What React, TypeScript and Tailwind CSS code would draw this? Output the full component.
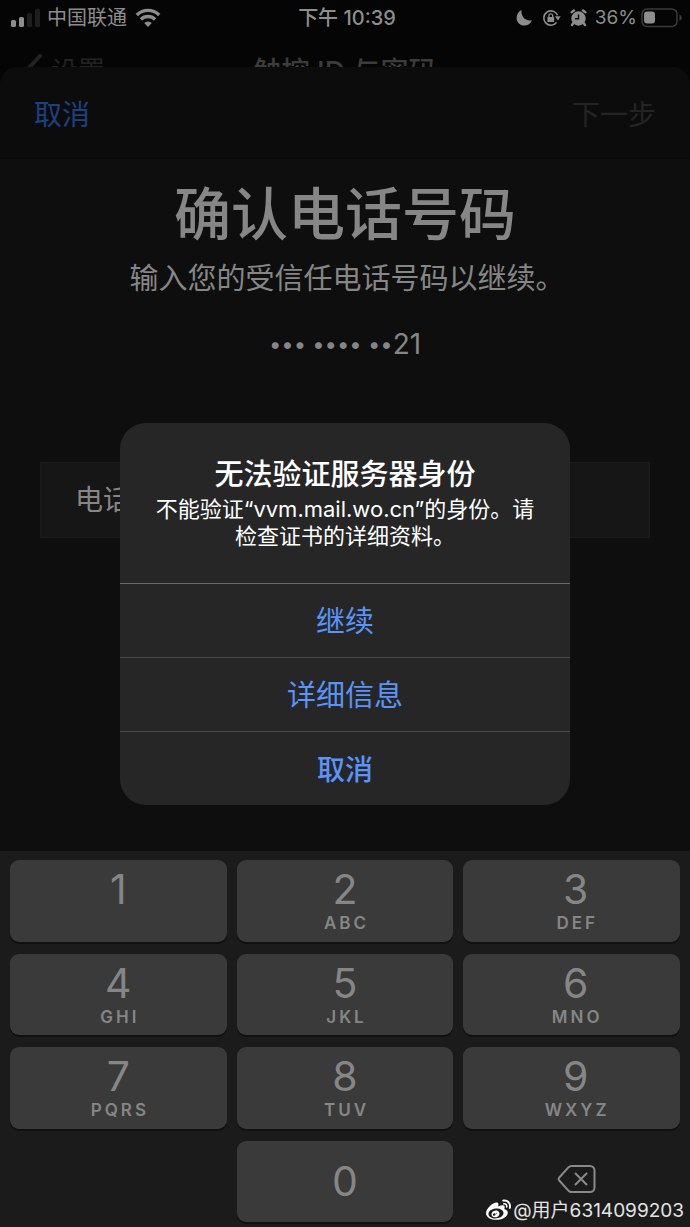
import { useState } from 'react'
import { FaWeibo } from 'react-icons/fa'

interface KeyItem {
  digit: string;
  letters?: string;
}

const keys: KeyItem[] = [
  { digit: '1', letters: '' },
  { digit: '2', letters: 'ABC' },
  { digit: '3', letters: 'DEF' },
  { digit: '4', letters: 'GHI' },
  { digit: '5', letters: 'JKL' },
  { digit: '6', letters: 'MNO' },
  { digit: '7', letters: 'PQRS' },
  { digit: '8', letters: 'TUV' },
  { digit: '9', letters: 'WXYZ' },
]

const SignalIcon = () => (
  <svg width="30" height="20" viewBox="0 0 30 20" aria-hidden="true">
    <rect x="0" y="12" width="5" height="7" rx="1.5" fill="#8d8d8d" />
    <rect x="8" y="9" width="5" height="10" rx="1.5" fill="#8d8d8d" />
    <rect x="16" y="5" width="5" height="14" rx="1.5" fill="#1e1e1e" />
    <rect x="24" y="1" width="5" height="18" rx="1.5" fill="#1e1e1e" />
  </svg>
)

const WifiIcon = () => (
  <svg width="26" height="20" viewBox="0 0 26 20" fill="none" stroke="#8d8d8d" strokeWidth="3.4" aria-hidden="true">
    <path d="M1.8 7a15.8 15.8 0 0 1 22.4 0" />
    <path d="M5.9 11.4a10 10 0 0 1 14.2 0" />
    <path d="M13 19l-3.8-4a5.400 5.400 0 0 1 7.600 0z" fill="#8d8d8d" stroke="none" />
  </svg>
)

const MoonIcon = () => (
  <svg width="17" height="18" viewBox="0 0 17 18" fill="#8d8d8d" aria-hidden="true">
    <path d="M5.6 1C4.6 6.8 8.8 12.6 16 11.3C14.6 14.8 11.8 16.6 8.4 16.6C4 16.6 .6 13.4 .6 9C.6 5.4 2.5 2.3 5.6 1z" />
  </svg>
)

const RotationLockIcon = () => (
  <svg width="19" height="18" viewBox="0 0 19 18" fill="none" stroke="#8d8d8d" strokeWidth="1.6" aria-hidden="true">
    <path d="M15.6 6.200A7.200 7.200 0 1 0 14.600 13.600" />
    <path d="M12.900 7.200h5.800l-2.700 4.400z" fill="#8d8d8d" stroke="none" />
    <rect x="5.400" y="7.900" width="6.800" height="5" rx="0.7" fill="#8d8d8d" stroke="none" />
    <path d="M6.900 8.200V6.700a1.900 1.900 0 0 1 3.800 0v1.500" strokeWidth="1.3" />
  </svg>
)

const AlarmIcon = () => (
  <svg width="17" height="18" viewBox="0 0 17 18" aria-hidden="true">
    <g stroke="#8d8d8d" strokeWidth="2.4" strokeLinecap="round">
      <path d="M1.600 3.200l2.400-1.600M15.400 3.200l-2.400-1.600M3.400 14l-1.400 2M13.600 14l1.400 2" />
    </g>
    <circle cx="8.500" cy="9.500" r="7.200" fill="#8d8d8d" />
    <path d="M8.500 5.500v4.300H5" fill="none" stroke="#050505" strokeWidth="1.4" />
  </svg>
)

const BatteryIcon = () => (
  <svg width="42" height="20" viewBox="0 0 42 20" aria-hidden="true">
    <rect x="1" y="1" width="35" height="17.500" rx="5" fill="none" stroke="#3b3b3b" strokeWidth="1.5" />
    <rect x="3" y="3.500" width="11" height="12" rx="3" fill="#8d8d8d" />
    <path d="M38.500 6.500c3 1.500 3 5 0 6.500z" fill="#3b3b3b" />
  </svg>
)

const DeleteIcon = () => (
  <svg width="40" height="30" viewBox="0 0 40 30" fill="none" stroke="#8a8a8a" strokeWidth="2" strokeLinejoin="round" aria-hidden="true">
    <path d="M14.500 2H33a4.500 4.500 0 0 1 4.500 4.500v17A4.500 4.500 0 0 1 33 28H14.500a4 4 0 0 1-2.900-1.200L2.300 16.500a2 2 0 0 1 0-3L11.600 3.200A4 4 0 0 1 14.500 2z" />
    <path d="M18.500 9.500l11 11M29.500 9.500l-11 11" strokeLinecap="round" />
  </svg>
)

const App = () => {
  const [phone, setPhone] = useState('')
  const [showAlert, setShowAlert] = useState(true)

  return (
    <div className="relative flex min-h-screen flex-col overflow-hidden bg-[#050505] font-['Inter','Noto_Sans_CJK_SC',sans-serif] text-[#868686]">
      <header className="grid h-9 grid-cols-[1fr_auto_1fr] items-center pl-[11px] pr-[7px] text-[20px] leading-5 text-[#8d8d8d]">
        <div className="flex items-center">
          <SignalIcon />
          <span className="ml-[6px] mr-2">中国联通</span>
          <WifiIcon />
        </div>
        <span className="font-medium">下午 10:39</span>
        <div className="flex items-center justify-end">
          <MoonIcon />
          <span className="ml-[9px]"><RotationLockIcon /></span>
          <span className="ml-[9px] mr-2"><AlarmIcon /></span>
          <span className="mr-1 text-[19px]">36%</span>
          <BatteryIcon />
        </div>
      </header>

      {/* settings page bar, the sheet below slides over it */}
      <div className="-mb-5 grid h-[51px] grid-cols-[1fr_auto_1fr] pl-[24px] pr-6 pt-[18px] text-[28px] leading-9">
        <div className="flex text-[27px] text-[#222222]">
          <svg width="19" height="32" viewBox="0 0 19 32" fill="none" stroke="#222222" strokeWidth="4" strokeLinecap="round" aria-hidden="true">
            <path d="M16 2L3 16l13 14" />
          </svg>
          <span className="ml-2">设置</span>
        </div>
        <h2 className="font-medium text-[#3c3c3c]">触控 ID 与密码</h2>
      </div>

      <main className="relative flex flex-1 flex-col rounded-t-[18px] bg-[#0e0e0e]">
        <div className="flex h-[92px] items-center justify-between rounded-t-[18px] border-b border-[#0a0a0a] bg-[#0c0c0c] px-[34px] pt-1 text-[28px]">
          <button className="text-[#1c4180]">取消</button>
          <button className="text-[#242424]">下一步</button>
        </div>

        <div className="flex flex-col items-center pt-[22px] text-center">
          <h1 className="text-[57px] font-medium leading-[68px]">确认电话号码</h1>
          <p className="mt-2 pl-1 text-[29px] leading-[44px]">输入您的受信任电话号码以继续。</p>
          <p className="mt-[25px] flex items-center text-[28px] leading-9">
            <span className="text-[22px]">••• •••• ••</span>
            <span>21</span>
          </p>
        </div>

        <div className="mx-10 mt-[100px] flex h-[76px] items-center border border-[#1c1c1c] bg-[#161616] px-[34px] text-[28px]">
          <label htmlFor="phone">电话</label>
          <input
            id="phone"
            type="tel"
            className="ml-8 min-w-0 flex-1 bg-transparent outline-none"
            value={phone}
            onChange={(e) => setPhone(e.target.value)}
          />
        </div>
      </main>

      <div className="grid h-[376px] grid-cols-3 grid-rows-4 gap-x-[10px] gap-y-3 bg-[#1b1b1b] px-[10px] pb-[5px] pt-[9px]">
        {keys.map((key) => (
          <button
            key={key.digit}
            className="flex flex-col items-center rounded-[9px] bg-[#3a3a3a] pt-[9px] shadow-[0_2px_0_#101010] nth-[3n]:pl-2"
            onClick={() => setPhone(phone + key.digit)}
          >
            <span className="text-[41px] leading-10">{key.digit}</span>
            {key.letters && <span className="mt-1 pl-[3px] text-[17px] font-semibold leading-5 tracking-[3px]">{key.letters}</span>}
          </button>
        ))}
        <button
          className="col-start-2 rounded-[9px] bg-[#3a3a3a] text-[41px] leading-10 shadow-[0_2px_0_#101010]"
          onClick={() => setPhone(phone + '0')}
        >
          0
        </button>
        <button className="flex items-center justify-center pb-1 pl-[10px]" aria-label="删除" onClick={() => setPhone(phone.slice(0, -1))}>
          <DeleteIcon />
        </button>
      </div>

      {showAlert && (
        <div className="absolute inset-0 flex items-center justify-center">
          <div role="alertdialog" aria-labelledby="alert-title" className="w-[450px] overflow-hidden rounded-[26px] bg-[#262626] text-center">
            <div className="px-8 pb-[33px] pt-8 text-white">
              <h3 id="alert-title" className="text-[29px] font-medium leading-10">无法验证服务器身份</h3>
              <p className="pt-px text-[22px] leading-[27px]">
                不能验证“vvm.mail.wo.cn”的身份。请
                <br />
                检查证书的详细资料。
              </p>
            </div>
            <button className="block h-[74px] w-full border-t border-[#6b6b6b] pt-1 text-[29px] text-[#5a94f8]" onClick={() => setShowAlert(false)}>继续</button>
            <button className="block h-[74px] w-full border-t border-[#4a4a4a] pt-1 text-[29px] text-[#5a94f8]">详细信息</button>
            <button className="block h-[74px] w-full border-t border-[#4a4a4a] pt-1 text-[28px] font-medium text-[#5a94f8]" onClick={() => setShowAlert(false)}>取消</button>
          </div>
        </div>
      )}

      <div className="absolute bottom-1 right-[6px] flex items-center text-[19px] leading-6 text-[#e4e4e4]">
        <FaWeibo className="mr-[2px] size-[25px] text-white" />
        <span>@用户6314099203</span>
      </div>
    </div>
  )
}

export default App
